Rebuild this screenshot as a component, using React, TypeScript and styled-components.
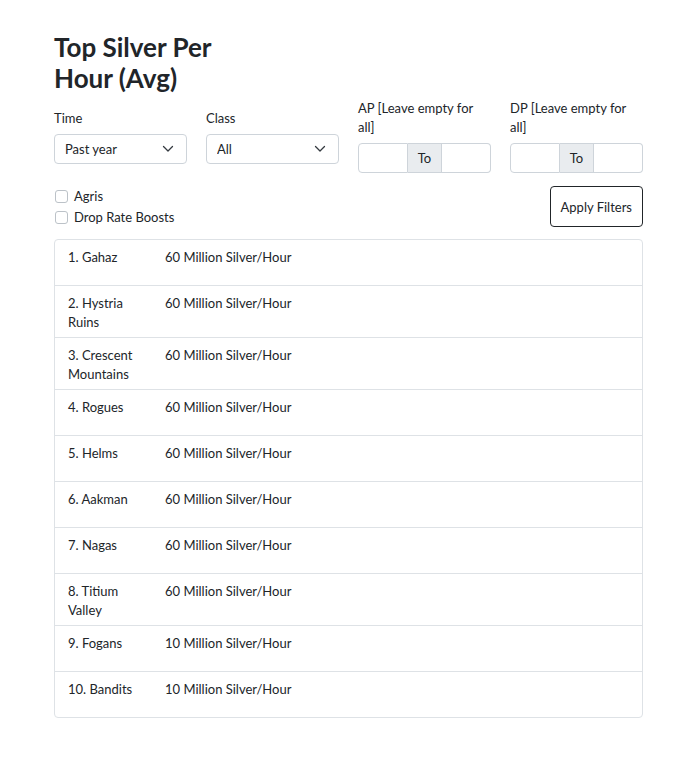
import React, { useState } from "react";
import styled, { createGlobalStyle } from "styled-components";

const GlobalStyle = createGlobalStyle`
  body {
    margin: 0;
    background: #fff;
    color: #212529;
    font-family: Lato, "Noto Sans", sans-serif;
    font-size: 13px;
  }
  * { box-sizing: border-box; }
`;

const zones = [
  { name: "Gahaz", silver: "60 Million Silver/Hour" },
  { name: "Hystria Ruins", silver: "60 Million Silver/Hour" },
  { name: "Crescent Mountains", silver: "60 Million Silver/Hour" },
  { name: "Rogues", silver: "60 Million Silver/Hour" },
  { name: "Helms", silver: "60 Million Silver/Hour" },
  { name: "Aakman", silver: "60 Million Silver/Hour" },
  { name: "Nagas", silver: "60 Million Silver/Hour" },
  { name: "Titium Valley", silver: "60 Million Silver/Hour" },
  { name: "Fogans", silver: "10 Million Silver/Hour" },
  { name: "Bandits", silver: "10 Million Silver/Hour" },
];

const Chevron = () => (
  <svg width="12" height="8" viewBox="0 0 12 8" fill="none">
    <path d="M1.5 1.5l4.5 4.5 4.5-4.5" stroke="#343a40" strokeWidth="1.3" strokeLinecap="round" strokeLinejoin="round" />
  </svg>
);

const App: React.FC = () => {
  const [time, setTime] = useState("year");
  const [cls, setCls] = useState("all");
  const [agris, setAgris] = useState(false);
  const [drop, setDrop] = useState(false);

  return (
    <Page>
      <GlobalStyle />
      <Title>Top Silver Per Hour (Avg)</Title>

      <FilterRow>
        <Field>
          <Label>Time</Label>
          <SelectWrap>
            <Select value={time} onChange={(e) => setTime(e.target.value)}>
              <option value="year">Past year</option>
              <option value="month">Past month</option>
            </Select>
            <Chevron />
          </SelectWrap>
        </Field>
        <Field>
          <Label>Class</Label>
          <SelectWrap>
            <Select value={cls} onChange={(e) => setCls(e.target.value)}>
              <option value="all">All</option>
            </Select>
            <Chevron />
          </SelectWrap>
        </Field>
        <Field>
          <Label>AP [Leave empty for all]</Label>
          <InputGroup>
            <RangeInput type="text" />
            <Addon>To</Addon>
            <RangeInput type="text" $last />
          </InputGroup>
        </Field>
        <Field>
          <Label>DP [Leave empty for all]</Label>
          <InputGroup>
            <RangeInput type="text" />
            <Addon>To</Addon>
            <RangeInput type="text" $last />
          </InputGroup>
        </Field>
      </FilterRow>

      <OptionsRow>
        <Checks>
          <Check>
            <input type="checkbox" checked={agris} onChange={() => setAgris(!agris)} />
            Agris
          </Check>
          <Check>
            <input type="checkbox" checked={drop} onChange={() => setDrop(!drop)} />
            Drop Rate Boosts
          </Check>
        </Checks>
        <ApplyButton>Apply Filters</ApplyButton>
      </OptionsRow>

      <List>
        {zones.map((z, i) => (
          <Item key={z.name}>
            <Name>{`${i + 1}. ${z.name}`}</Name>
            <Value>{z.silver}</Value>
          </Item>
        ))}
      </List>
    </Page>
  );
};

export default App;

const Page = styled.div`
  width: 589px;
  margin-left: 54px;
  padding-top: 32px;
  padding-bottom: 54px;
`;

const Title = styled.h1`
  width: 180px;
  margin: 0 0 5px;
  font-size: 26px;
  line-height: 1.2;
  font-weight: 700;
`;

const FilterRow = styled.div`
  display: grid;
  grid-template-columns: repeat(4, minmax(0, 1fr));
  column-gap: 19px;
  align-items: center;
`;

const Field = styled.div`
  display: flex;
  flex-direction: column;
  min-width: 0;
`;

const Label = styled.label`
  line-height: 19px;
  margin-bottom: 6px;
  padding-right: 12px;
`;

const SelectWrap = styled.div`
  position: relative;
  height: 30px;

  svg {
    position: absolute;
    right: 13px;
    top: 11px;
    pointer-events: none;
  }
`;

const Select = styled.select`
  appearance: none;
  -webkit-appearance: none;
  width: 100%;
  height: 30px;
  padding: 0 30px 0 10px;
  font: inherit;
  color: #212529;
  background: #fff;
  border: 1px solid #ced4da;
  border-radius: 4px;
`;

const InputGroup = styled.div`
  display: flex;
  height: 30px;
`;

const RangeInput = styled.input<{ $last?: boolean }>`
  flex: 1;
  width: 0;
  min-width: 0;
  font: inherit;
  border: 1px solid #ced4da;
  border-radius: ${(p) => (p.$last ? "0 4px 4px 0" : "4px 0 0 4px")};
  ${(p) => (p.$last ? "border-left: none;" : "")}
`;

const Addon = styled.span`
  width: 34px;
  flex-shrink: 0;
  display: flex;
  align-items: center;
  justify-content: center;
  background: #e9ecef;
  border: 1px solid #ced4da;
  border-left: none;
`;

const OptionsRow = styled.div`
  display: flex;
  justify-content: space-between;
  align-items: center;
  margin-top: 13px;
`;

const Checks = styled.div`
  display: flex;
  flex-direction: column;
`;

const Check = styled.label`
  display: flex;
  align-items: center;
  gap: 6px;
  line-height: 20.5px;

  input {
    appearance: none;
    -webkit-appearance: none;
    width: 13px;
    height: 13px;
    margin: 0 0 0 1px;
    border: 1px solid #bcc2c8;
    border-radius: 3px;
    background: #fff;
  }
  input:checked {
    background: #0d6efd;
    border-color: #0d6efd;
  }
`;

const ApplyButton = styled.button`
  height: 41px;
  padding: 0 10px;
  font: inherit;
  color: #212529;
  background: #fff;
  border: 1px solid #212529;
  border-radius: 4px;
`;

const List = styled.div`
  margin-top: 12px;
  border: 1px solid #dee2e6;
  border-radius: 4px;
`;

const Item = styled.div`
  display: flex;
  gap: 15px;
  padding: 8px 14px 5px 13px;
  line-height: 19px;
  border-top: 1px solid #dee2e6;

  &:first-child {
    border-top: none;
  }
`;

const Name = styled.div`
  width: 82px;
  flex-shrink: 0;
`;

const Value = styled.div`
  min-height: 32px;
`;
